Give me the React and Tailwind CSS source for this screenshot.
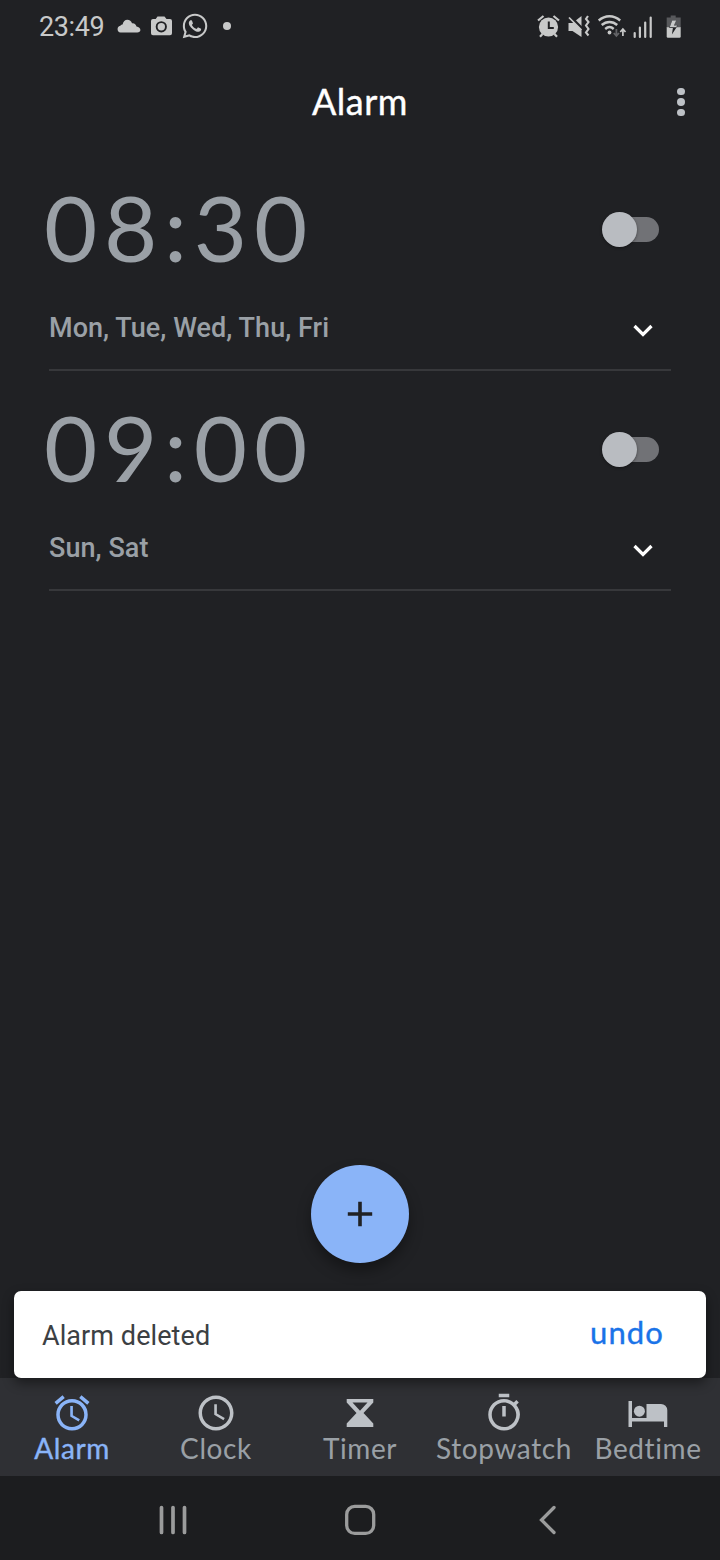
import { FaWhatsapp } from "react-icons/fa";
import { MdAlarm, MdAccessTime, MdOutlineTimer } from "react-icons/md";

function StatusBar() {
  return (
    <div className="flex h-[52px] items-center justify-between pl-[39px] pr-[36px] text-[#c8c9c9]">
      <div className="flex items-center">
        <span className="w-[77.500px] whitespace-nowrap font-['Roboto',sans-serif] text-[27px] leading-[52px] tracking-[-0.400px] pt-[2px]">23:49</span>
        <svg className="h-[14px] w-[24px]" viewBox="0 0 24 14" fill="currentColor">
          <path d="M3.500 13.500A3.400 3.400 0 0 1 3.300 6.800C4 5.900 5 5.600 5.600 5.500 6.200 2.500 8 .8 10.300.8c2.400 0 4 1.300 4.700 3.400 2.400-.3 4 1 4.500 3.200 2.300.3 3.900 1.500 3.900 3.600 0 1.500-1.300 2.500-3.100 2.500z" />
        </svg>
        <svg className="ml-[9.500px] h-[20px] w-[23px]" viewBox="0 0 23 20" fill="currentColor" fillRule="evenodd">
          <path d="M7.500 .5h7l2 2.500h3.500a2 2 0 0 1 2 2v12.200a2 2 0 0 1-2 2H3a2 2 0 0 1-2-2V5a2 2 0 0 1 2-2h2.700zM11.300 5.200a5.600 5.600 0 1 0 0 11.200 5.600 5.600 0 0 0 0-11.200zM11.300 7.100a3.700 3.700 0 1 1 0 7.400 3.700 3.700 0 0 1 0-7.400z" />
        </svg>
        <FaWhatsapp className="ml-[7.500px] h-[28px] w-[28px]" />
        <span className="ml-[14.500px] h-[8px] w-[8px] rounded-full bg-current" />
      </div>
      <svg className="mt-[1px] h-[26px] w-[147px]" viewBox="0 0 147 26" fill="none" stroke="currentColor">
        <circle cx="11.500" cy="13" r="9.600" fill="currentColor" stroke="none" />
        <path d="M1 6.500 6.500 2M22 6.500 16.500 2M5.500 20 3 22.800M17.500 20 20 22.800" strokeWidth="2.200" />
        <path d="M11.800 7.500v6.500h5" stroke="#202124" strokeWidth="2" />
        <path d="M31.500 9h4l9-7v21l-9-6h-4z" fill="currentColor" stroke="none" />
        <path d="M31 .5 48 17.500" stroke="#202124" strokeWidth="3" />
        <path d="M32 3.500 44.500 16" strokeWidth="1.700" />
        <path d="M51 2 49 5l2.500 3-2.500 3.500 2.500 3.500-2.500 3.500 2.500 3" strokeWidth="2.100" />
        <g transform="translate(-.8 0)">
          <path d="M62.500 6.500c6.500-5.700 15-5.700 21.500 0M65.500 11c4.700-4.100 11-4.100 15.500 0M69 15c2.700-2.300 6-2.300 8.500 0" strokeWidth="2.400" />
          <circle cx="73.300" cy="18.500" r="1.900" fill="currentColor" stroke="none" />
          <path d="M80.200 15v7M77.600 19l2.600 3 2.600-3" stroke="#626366" strokeWidth="1.800" />
          <path d="M86.700 22v-7M84.100 18l2.600-3 2.600 3" strokeWidth="1.700" />
          <path d="M98.500 19v4M103.700 13.500V23M109 8.500V23M114.500 3.500V23" strokeWidth="2.200" strokeLinecap="round" />
          <path d="M134.500 1.500h5v2h5V14h-14V3.500h4z" fill="#58595c" stroke="none" />
          <path d="M130.500 13.200h14V22.500a1.200 1.200 0 0 1-1.200 1.200h-11.600a1.200 1.200 0 0 1-1.200-1.200z" fill="currentColor" stroke="none" />
          <path d="M136 6.500h4l-2.300 5h3.800l-5.800 9 1-6.500H133z" fill="#202124" stroke="none" />
          <path d="M136 6.500h4l-2.300 5h3.300l-1 1.700h-6.500z" fill="currentColor" stroke="none" />
        </g>
      </svg>
    </div>
  );
}

function AlarmRow({ time, days }) {
  return (
    <section className="mx-[49px] flex h-[220px] flex-col border-b-2 border-[#37383b] text-[#9aa0a6]">
      <div className="flex h-[156px] items-center justify-between pr-[12px]">
        <span className="-ml-[5px] mb-[5px] whitespace-nowrap font-['Lato',sans-serif] text-[92px] leading-none tracking-[6.700px]">{time}</span>
        <button aria-label="Toggle alarm" className="flex h-[35px] w-[57px] items-center">
          <span className="z-10 h-[35px] w-[35px] shrink-0 rounded-full bg-[#b9bcc1] shadow-[0_1px_3px_rgba(0,0,0,0.4)]" />
          <span className="-ml-[17px] h-[25px] w-[39px] rounded-r-full bg-[#717276]" />
        </button>
      </div>
      <div className="mt-[1px] flex h-[40px] items-center justify-between pr-[17px]">
        <span className="whitespace-nowrap font-['Roboto',sans-serif] text-[27px] font-medium tracking-[0.050px]">{days}</span>
        <svg className="mt-[5px] h-[14px] w-[22px]" viewBox="0 0 22 14" fill="none" stroke="white" strokeWidth="3.200">
          <path d="M2.500 2 11 10.500 19.500 2" />
        </svg>
      </div>
    </section>
  );
}

const HourglassIcon = () => (
  <svg className="h-[42px] w-[42px]" viewBox="0 0 42 42" fill="currentColor" fillRule="evenodd">
    <path d="M7.700 7h26.600v3.500L24.500 21l9.800 10.500V35H7.700v-3.500L17.500 21 7.700 10.500zM13.500 10.500 21 18.700l7.500-8.200z" />
  </svg>
);

const BedIcon = () => (
  <svg className="h-[42px] w-[42px]" viewBox="0 0 42 42" fill="currentColor">
    <path d="M1.500 9H5v17h14.500V12H34a6.300 6.300 0 0 1 6.300 6.300V35H37v-5.500H5V35H1.500z" />
    <circle cx="12.400" cy="19.200" r="5.500" />
  </svg>
);

const tabs = [
  { name: "Alarm", Icon: MdAlarm, text: "text-[#8ab4f8] [-webkit-text-stroke:0.400px_#8ab4f8]", icon: "text-[#8ab4f8]" },
  { name: "Clock", Icon: MdAccessTime, text: "text-[#9aa0a6]", icon: "text-[#bdc1c6]" },
  { name: "Timer", Icon: HourglassIcon, text: "text-[#9aa0a6]", icon: "text-[#bdc1c6]" },
  { name: "Stopwatch", Icon: MdOutlineTimer, text: "text-[#9aa0a6]", icon: "text-[#bdc1c6]" },
  { name: "Bedtime", Icon: BedIcon, text: "text-[#9aa0a6]", icon: "text-[#bdc1c6]" },
];

export default function App() {
  return (
    <div className="flex h-[1560px] w-[720px] flex-col overflow-hidden bg-[#202124]">
      <StatusBar />
      <header className="grid h-[99px] grid-cols-[78px_1fr_78px] items-center">
        <h1 className="col-start-2 pb-[2px] text-center font-['Lato',sans-serif] text-[36px] tracking-[0.500px] text-white [-webkit-text-stroke:0.400px_white]">Alarm</h1>
        <div className="flex flex-col items-center gap-[3px] pt-[1px]">
          <span className="h-[7.500px] w-[7.500px] rounded-full bg-[#bdc1c6]" />
          <span className="h-[7.500px] w-[7.500px] rounded-full bg-[#bdc1c6]" />
          <span className="h-[7.500px] w-[7.500px] rounded-full bg-[#bdc1c6]" />
        </div>
      </header>
      <main className="flex flex-1 flex-col">
        <AlarmRow time="08:30" days="Mon, Tue, Wed, Thu, Fri" />
        <AlarmRow time="09:00" days="Sun, Sat" />
        <button aria-label="Add alarm" className="mb-[28px] mt-auto flex h-[98px] w-[98px] items-center justify-center self-center rounded-full bg-[#8ab4f8] shadow-[0_8px_14px_rgba(0,0,0,0.35)]">
          <svg className="h-[26px] w-[26px]" viewBox="0 0 26 26" stroke="#202124" strokeWidth="3.600">
            <path d="M13 .8v24.400M.8 13h24.400" />
          </svg>
        </button>
      </main>
      <div className="z-10 mx-[14px] flex h-[87px] shrink-0 items-center justify-between rounded-[7px] bg-white pl-[28px] pr-[42px] shadow-[0_5px_12px_rgba(0,0,0,0.450)]">
        <span className="pt-[4px] font-['Roboto',sans-serif] text-[27px] tracking-[0.080px] text-[#3c4043]">Alarm deleted</span>
        <button className="pb-[4px] font-['Lato',sans-serif] text-[31px] tracking-[1.100px] text-[#1a73e8] [-webkit-text-stroke:0.400px_#1a73e8]">undo</button>
      </div>
      <nav className="grid h-[98px] shrink-0 grid-cols-5 bg-[#2f3034]">
        {tabs.map(({ name, Icon, text, icon }) => (
          <div key={name} className="flex flex-col items-center pt-[14px]">
            <span className={icon}><Icon className="h-[42px] w-[42px]" /></span>
            <span className={`-mt-[1px] whitespace-nowrap font-['Lato',sans-serif] text-[28px] leading-[30px] tracking-[0.600px] ${text}`}>{name}</span>
          </div>
        ))}
      </nav>
      <div className="flex h-[84px] shrink-0 items-center bg-[#1c1d1f] pl-[157px] text-[#9b9c9c]">
        <svg className="mt-[4px] h-[34px] w-[402px]" viewBox="0 0 402 34" fill="none" stroke="currentColor" strokeLinecap="round">
          <path d="M4.500 4.500v25M16 4.500v25M27.500 4.500v25" strokeWidth="3.700" />
          <rect x="189.700" y="3.400" width="27" height="27" rx="8" strokeWidth="3.300" />
          <path d="M397 4.500 384.500 17 397 29.500" strokeWidth="3.300" />
        </svg>
      </div>
    </div>
  );
}
